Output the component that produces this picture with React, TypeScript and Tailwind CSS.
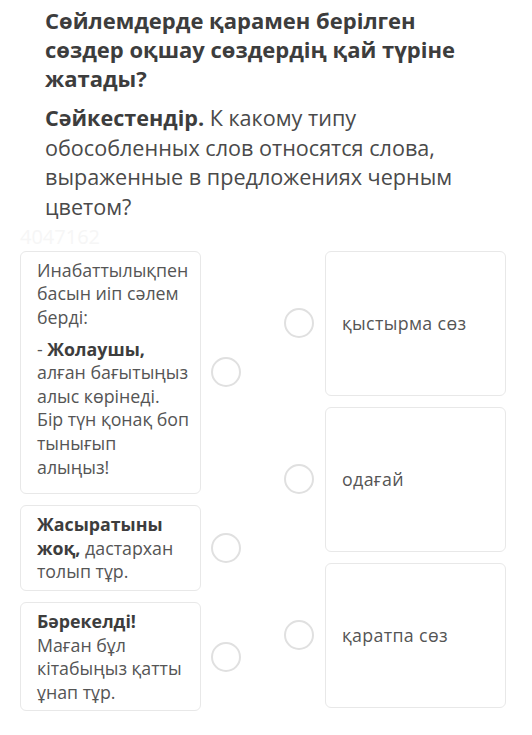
const font = { fontFamily: '"Open Sans", "Noto Sans", sans-serif' };

function Circle() {
  return <span className="block w-[30px] h-[30px] shrink-0 rounded-full border-[2.5px] border-[#e0e0e0] bg-white" />;
}

const leftCard =
  "w-[181px] shrink-0 rounded-[6px] border-[1.5px] border-[#e8e8e8] bg-white pl-4 pr-[10px] pt-[7px] pb-[6px] text-[17.8px] leading-[23.6px] text-[#555]";
const rightCard =
  "w-[181px] h-[145px] shrink-0 flex items-center rounded-[6px] border-[1.5px] border-[#e8e8e8] bg-white px-4 text-[17.8px] tracking-[0.02em] text-[#555]";

export default function App() {
  return (
    <div className="w-[532px] min-h-[735px] bg-white" style={font}>
      <div className="pl-[45px] pr-[60px] pt-[6px]">
        <h1 className="text-[22px] leading-[29px] font-bold text-[#3d3d3d]">
          Сөйлемдерде қарамен берілген сөздер оқшау сөздердің қай түріне жатады?
        </h1>
        <p className="mt-[10px] text-[21.6px] leading-[29.7px] text-[#4a4a4a]">
          <strong className="font-bold text-[#3d3d3d]">Сәйкестендір.</strong> К какому типу обособленных слов относятся слова, выраженные в предложениях черным цветом?
        </p>
      </div>
      <div className="pl-[20px] h-[29px] text-[20px] leading-[29px] text-[#f6f6f6]">4047162</div>

      <div className="flex px-[20px] pb-[27px]">
        <div className="flex flex-col gap-[11px]">
          <div className="flex items-center gap-[10px]">
            <div className={leftCard + " pb-[14px]"}>
              <p className="mb-2">Инабаттылықпен басын иіп сәлем берді:</p>
              <p>
                - <b className="font-bold text-[#3d3d3d]">Жолаушы,</b> алған бағытыңыз алыс көрінеді. Бір түн қонақ боп тынығып алыңыз!
              </p>
            </div>
            <Circle />
          </div>
          <div className="flex items-center gap-[10px]">
            <div className={leftCard}>
              <b className="font-bold text-[#3d3d3d]">Жасыратыны жоқ,</b> дастархан толып тұр.
            </div>
            <Circle />
          </div>
          <div className="flex items-center gap-[10px]">
            <div className={leftCard}>
              <b className="font-bold text-[#3d3d3d]">Бәрекелді!</b> Маған бұл кітабыңыз қатты ұнап тұр.
            </div>
            <Circle />
          </div>
        </div>

        <div className="ml-[43px] flex flex-col gap-[11px]">
          {["қыстырма сөз", "одағай", "қаратпа сөз"].map((t) => (
            <div key={t} className="flex items-center gap-[11px]">
              <Circle />
              <div className={rightCard}>{t}</div>
            </div>
          ))}
        </div>
      </div>
    </div>
  );
}
